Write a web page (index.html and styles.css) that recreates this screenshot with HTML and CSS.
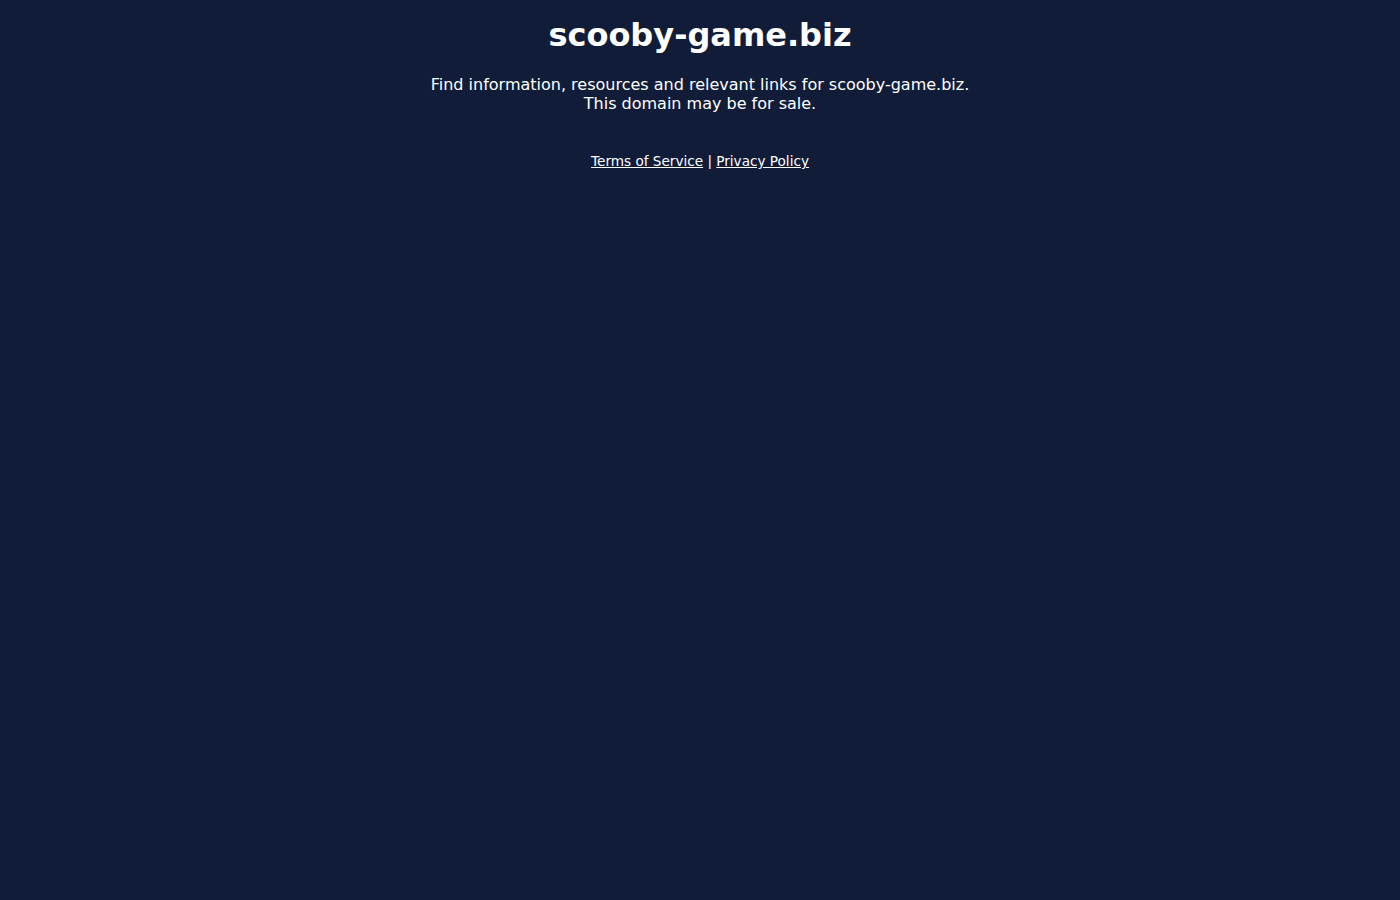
FILE: index.html
```html
<!DOCTYPE html>
<html>
<head>
<meta charset="utf-8">
<link rel="stylesheet" href="styles.css">
</head>
<body>
<div class="wrap">
<h1 class="title">scooby-game.biz</h1>
<p class="desc">Find information, resources and relevant links for scooby-game.biz.<br>This domain may be for sale.</p>
<p class="links"><a href="#">Terms of Service</a> | <a href="#">Privacy Policy</a></p>
</div>
</body>
</html>
```
FILE: styles.css
```css
html, body { background: #111d38; }
body { margin: 8px; font-family: "DejaVu Sans", sans-serif; color: #ffffff; text-align: center; }
.title { font-size: 32px; font-weight: bold; margin: 8px 0 0; }
.desc { font-size: 16px; margin: 21px 0 0; }
.links { font-size: 13.6px; margin: 40px 0 0; }
.links a { color: #ffffff; }
```
